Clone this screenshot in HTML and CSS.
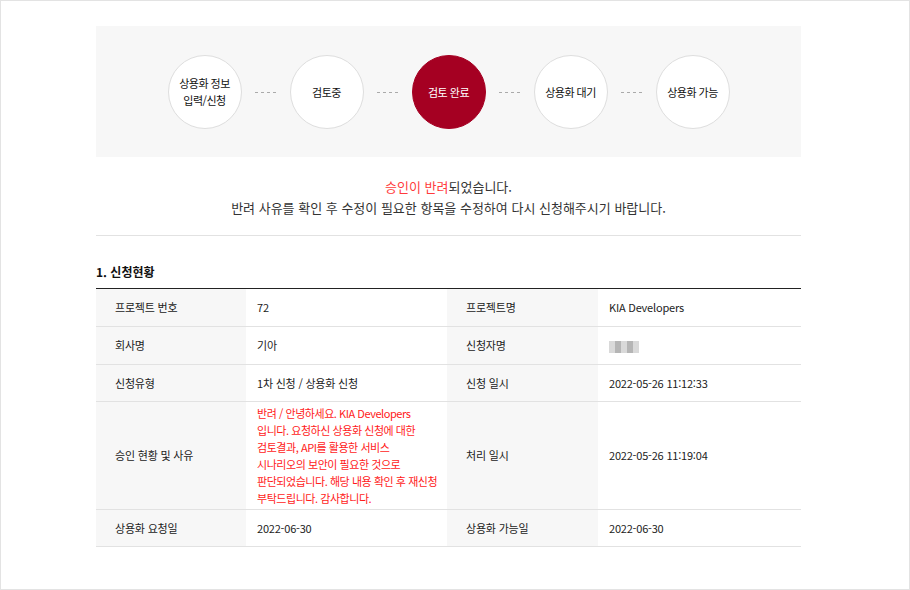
FILE: index.html
```html
<!DOCTYPE html>
<html lang="ko">
<head>
<meta charset="utf-8">
<link rel="stylesheet" href="styles.css">
</head>
<body>
<div class="frame">
  <div class="content">
    <div class="steps">
      <div class="step">상용화 정보<br>입력/신청</div>
      <span class="dots"></span>
      <div class="step">검토중</div>
      <span class="dots"></span>
      <div class="step active">검토 완료</div>
      <span class="dots"></span>
      <div class="step">상용화 대기</div>
      <span class="dots"></span>
      <div class="step">상용화 가능</div>
    </div>
    <div class="message">
      <p><span class="red">승인이 반려</span>되었습니다.</p>
      <p>반려 사유를 확인 후 수정이 필요한 항목을 수정하여 다시 신청해주시기 바랍니다.</p>
    </div>
    <h2 class="title">1. 신청현황</h2>
    <table class="info">
      <colgroup><col class="c1"><col class="c2"><col class="c3"><col class="c4"></colgroup>
      <tr><th>프로젝트 번호</th><td>72</td><th>프로젝트명</th><td>KIA Developers</td></tr>
      <tr><th>회사명</th><td>기아</td><th>신청자명</th><td><span class="blur"><i></i><i class="d"></i><i></i><i class="d"></i><i></i></span></td></tr>
      <tr><th>신청유형</th><td>1차 신청 / 상용화 신청</td><th>신청 일시</th><td>2022-05-26 11:12:33</td></tr>
      <tr><th>승인 현황 및 사유</th><td class="reason">반려 / 안녕하세요. KIA Developers<br>입니다. 요청하신 상용화 신청에 대한<br>검토결과, API를 활용한 서비스<br>시나리오의 보안이 필요한 것으로<br>판단되었습니다. 해당 내용 확인 후 재신청<br>부탁드립니다. 감사합니다.</td><th>처리 일시</th><td>2022-05-26 11:19:04</td></tr>
      <tr><th>상용화 요청일</th><td>2022-06-30</td><th>상용화 가능일</th><td>2022-06-30</td></tr>
    </table>
  </div>
</div>
</body>
</html>
```
FILE: styles.css
```css
html, body { margin: 0; padding: 0; }
body {
  font-family: "Noto Sans CJK KR", "Noto Sans", sans-serif;
  color: #222;
  background: #fff;
}
.frame {
  width: 910px;
  height: 590px;
  box-sizing: border-box;
  border: 1px solid #e3e3e3;
  padding: 25px 0 0 95px;
  overflow: hidden;
}
.content { width: 705px; }
.steps {
  background: #f7f7f7;
  height: 131px;
  display: flex;
  align-items: center;
  justify-content: center;
  padding-top: 1px;
  box-sizing: border-box;
}
.step {
  width: 74px;
  height: 74px;
  box-sizing: border-box;
  border-radius: 50%;
  border: 1px solid #dedede;
  background: #fff;
  display: flex;
  align-items: center;
  justify-content: center;
  text-align: center;
  font-size: 11px;
  line-height: 17px;
  letter-spacing: -0.5px;
  color: #111;
}
.step.active {
  background: #a50022;
  border-color: #a50022;
  color: #fff;
}
.dots {
  width: 22px;
  height: 1px;
  margin: 0 13px;
  background: repeating-linear-gradient(90deg, #aaa 0 3px, transparent 3px 6px);
}
.message {
  text-align: center;
  font-size: 13px;
  line-height: 21px;
  color: #333;
  padding: 19px 0 17px;
  border-bottom: 1px solid #e2e2e2;
}
.message p { margin: 0; }
.message .red { color: #ff3b3b; }
.title {
  margin: 26px 0 6px 0;
  font-size: 12px;
  font-weight: bold;
  line-height: 20px;
  color: #111;
}
.info {
  width: 705px;
  border-collapse: collapse;
  border-top: 1px solid #222;
  font-size: 11px;
  letter-spacing: -0.2px;
  color: #222;
}
.c1 { width: 150px; }
.c2 { width: 201px; }
.c3 { width: 151px; }
.c4 { width: 203px; }
.info th, .info td {
  height: 37px;
  padding: 0 11px;
  border-bottom: 1px solid #e2e2e2;
  text-align: left;
  vertical-align: middle;
  font-weight: normal;
  line-height: 17px;
}
.info th {
  background: #f7f7f7;
  padding-left: 19px;
}
.info tr:nth-child(n+3) th, .info tr:nth-child(n+3) td { height: 36px; }
.info td.reason {
  color: #ff1a1a;
  padding: 3px 4px 2px 11px;
  letter-spacing: -0.45px;
  white-space: nowrap;
}
.blur { display: inline-flex; vertical-align: middle; }
.blur i { width: 6px; height: 12px; background: #d9d9d9; }
.blur i.d { background: #b5b5b5; }
```
